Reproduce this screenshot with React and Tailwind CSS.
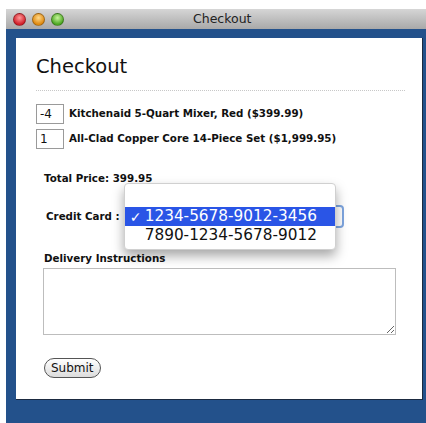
const cards = ["1234-5678-9012-3456", "7890-1234-5678-9012"];

function TrafficLight({ from, to }) {
  return (
    <span
      className="h-[13px] w-[13px] rounded-full border border-black/30"
      style={{ background: `radial-gradient(circle at 50% 35%, ${from}, ${to} 70%)` }}
    />
  );
}

export default function App() {
  return (
    <div className="h-[423px] w-[426px] bg-white pl-[6px] pt-[9px] font-['DejaVu_Sans',sans-serif] text-[#111]">
      <div className="flex h-[414px] flex-col">
        {/* title bar */}
        <div className="relative flex h-[20px] items-center bg-gradient-to-b from-[#d6d6d6] to-[#a9a9a9] pl-[7px]">
          <div className="flex gap-[6px]">
            <TrafficLight from="#ff9a9a" to="#d2202a" />
            <TrafficLight from="#ffd98a" to="#e08a10" />
            <TrafficLight from="#c6f59a" to="#4ea823" />
          </div>
          <span className="absolute left-[187px] top-[1px] text-[12.5px] text-[#222]">Checkout</span>
        </div>

        <div className="flex-1 bg-[#23518b] pb-[14px] pl-[10px] pr-[3px] pt-[9px]">
          <div className="h-[362px] border-b border-r border-[#1b2a40] bg-white pl-[20px] pr-[17px] pt-[14px]">
            <h1 className="text-[19.5px] leading-[30px] text-[#111]">Checkout</h1>
            <div className="mt-[8px] border-t border-dotted border-[#c8c8c8]" />

            <div className="mt-[13px] flex flex-col gap-[5px] text-[10.3px] font-bold">
              <div className="flex items-center gap-[5px]">
                <input
                  defaultValue="-4"
                  className="h-[20px] w-[28px] border border-[#9a9a9a] px-[3px] text-[12px] font-normal outline-none"
                />
                <span>Kitchenaid 5-Quart Mixer, Red ($399.99)</span>
              </div>
              <div className="flex items-center gap-[5px]">
                <input
                  defaultValue="1"
                  className="h-[20px] w-[28px] border border-[#9a9a9a] px-[3px] text-[12px] font-normal outline-none"
                />
                <span>All-Clad Copper Core 14-Piece Set ($1,999.95)</span>
              </div>
            </div>

            <div className="mt-[22px] pl-[8px] text-[10.3px] font-bold">Total Price: 399.95</div>

            <div className="mt-[19px] flex items-center pl-[10px] text-[10.3px] font-bold">
              <span>Credit Card :</span>
              <span className="relative ml-[4px] h-[23px] w-[220px] rounded-[4px] border-2 border-[#7ea6e0]">
                {/* open menu */}
                <div className="absolute left-[-2px] top-[-24px] w-[212px] rounded-[4px] border border-[#d0d0d0] bg-white pb-[4px] pt-[23px] shadow-[0_6px_12px_rgba(0,0,0,0.35)]">
                  {cards.map((c, i) => (
                    <div
                      key={c}
                      className={
                        "flex h-[19px] items-center text-[15.3px] font-normal leading-none " +
                        (i === 0 ? "bg-[#2a55e6] text-white" : "text-[#111]")
                      }
                    >
                      <span className="w-[20px] pl-[5px] text-[14px] font-bold">{i === 0 ? "✓" : ""}</span>
                      <span>{c}</span>
                    </div>
                  ))}
                </div>
              </span>
            </div>

            <div className="mt-[23px] pl-[8px] text-[10.3px] font-bold">Delivery Instructions</div>
            <div className="pl-[7px]">
              <textarea className="mt-[1px] block h-[67px] w-[353px] resize border border-[#bdbdbd] outline-none" />
            </div>

            <div className="mt-[20px] pl-[8px]">
              <button className="h-[20px] rounded-full border border-[#555] bg-gradient-to-b from-white to-[#dcdcdc] px-[6px] text-[12px] leading-none">
                Submit
              </button>
            </div>
          </div>
        </div>
      </div>
    </div>
  );
}
